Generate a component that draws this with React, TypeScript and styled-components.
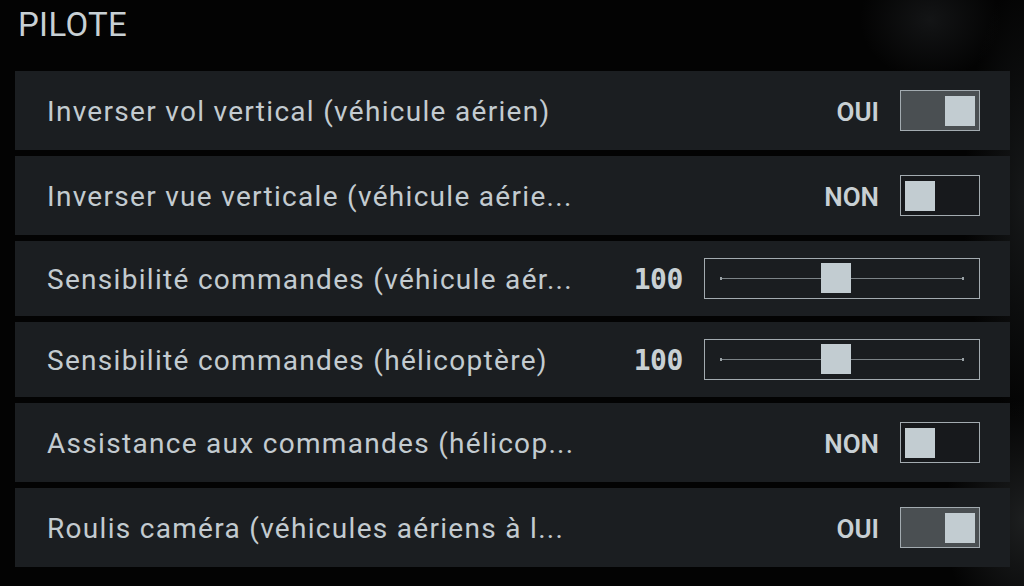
import React from 'react'
import styled, { createGlobalStyle } from 'styled-components'

const GlobalStyle = createGlobalStyle`
  html, body {
    margin: 0;
    padding: 0;
    background: #000;
  }
  body {
    font-family: Roboto, 'Liberation Sans', sans-serif;
    color: #c3cbd0;
  }
`

const Page = styled.div`
  width: 1024px;
  height: 586px;
  box-sizing: border-box;
  padding: 6px 14px 0 15px;
  overflow: hidden;
  background:
    radial-gradient(ellipse 60px 220px at 1024px 200px, rgba(40, 44, 46, 0.5), transparent),
    radial-gradient(ellipse 80px 120px at 1024px 520px, rgba(60, 64, 66, 0.45), transparent),
    radial-gradient(ellipse 70px 60px at 930px 20px, rgba(30, 32, 34, 0.6), transparent),
    #030303;
`

const Title = styled.h1`
  margin: 0 0 0 3px;
  height: 65px;
  font-size: 33px;
  font-weight: 400;
  letter-spacing: 0.3px;
  line-height: 38px;
  color: #c8d0d4;
`

const List = styled.div`
  display: flex;
  flex-direction: column;
  gap: 6px;
  width: 995px;
`

const Row = styled.div<{ $compact?: boolean }>`
  display: flex;
  align-items: center;
  height: ${(p) => (p.$compact ? 75 : 79)}px;
  padding: 0 30px 0 32px;
  box-sizing: border-box;
  background: #1b1e21;
`

const Label = styled.span`
  font-size: 28px;
  line-height: 32px;
  letter-spacing: 1.3px;
  color: #c3cbd0;
  white-space: nowrap;
  padding-top: 3px;
`

const Value = styled.span<{ $mono?: boolean }>`
  margin-left: auto;
  margin-right: 21px;
  padding-top: 2px;
  font-family: ${(p) =>
    p.$mono ? "'DejaVu Sans Mono', monospace" : "Roboto, 'Liberation Sans', sans-serif"};
  font-size: ${(p) => (p.$mono ? 28 : 26)}px;
  font-weight: ${(p) => (p.$mono ? 700 : 600)};
  letter-spacing: ${(p) => (p.$mono ? -0.4 : 0)}px;
  color: #c8d0d4;
`

const Toggle = styled.div<{ $on: boolean }>`
  display: flex;
  justify-content: ${(p) => (p.$on ? 'flex-end' : 'flex-start')};
  align-items: center;
  width: 80px;
  height: 41px;
  box-sizing: border-box;
  padding: 0 4px;
  border: 1.5px solid #a3abb0;
  background: ${(p) => (p.$on ? '#4a4f52' : '#17191c')};
`

const Knob = styled.div`
  width: 30px;
  height: 30px;
  background: #c2ccd1;
`

const Slider = styled.div`
  position: relative;
  width: 276px;
  height: 41px;
  box-sizing: border-box;
  padding: 0 15px;
  display: flex;
  align-items: center;
  border: 1.5px solid #a3abb0;
  background: #1a1d20;
`

const Track = styled.div`
  position: relative;
  flex: 1;
  height: 1px;
  background: #7c8387;

  &::before,
  &::after {
    content: '';
    position: absolute;
    top: -1px;
    width: 2px;
    height: 3px;
    background: #9aa2a6;
  }
  &::before {
    left: 0;
  }
  &::after {
    right: 0;
  }
`

const Thumb = styled.div`
  position: absolute;
  top: -15px;
  width: 30px;
  height: 30px;
  background: #c2ccd1;
`

type Setting =
  | { label: string; kind: 'toggle'; on: boolean }
  | { label: string; kind: 'slider'; value: number; min: number; max: number }

const settings: Setting[] = [
  { label: 'Inverser vol vertical (véhicule aérien)', kind: 'toggle', on: true },
  { label: 'Inverser vue verticale (véhicule aérie...', kind: 'toggle', on: false },
  { label: 'Sensibilité commandes (véhicule aér...', kind: 'slider', value: 100, min: 10, max: 200 },
  { label: 'Sensibilité commandes (hélicoptère)', kind: 'slider', value: 100, min: 10, max: 200 },
  { label: 'Assistance aux commandes (hélicop...', kind: 'toggle', on: false },
  { label: 'Roulis caméra (véhicules aériens à l...', kind: 'toggle', on: true },
]

const TRACK_WIDTH = 243
const THUMB_WIDTH = 30

const App: React.FC = () => {
  return (
    <Page>
      <GlobalStyle />
      <Title>PILOTE</Title>
      <List>
        {settings.map((s) =>
          s.kind === 'toggle' ? (
            <Row key={s.label}>
              <Label>{s.label}</Label>
              <Value>{s.on ? 'OUI' : 'NON'}</Value>
              <Toggle $on={s.on}>
                <Knob />
              </Toggle>
            </Row>
          ) : (
            <Row key={s.label} $compact>
              <Label>{s.label}</Label>
              <Value $mono>{s.value}</Value>
              <Slider>
                <Track>
                  <Thumb
                    style={{
                      left:
                        ((s.value - s.min) / (s.max - s.min)) *
                        (TRACK_WIDTH - THUMB_WIDTH),
                    }}
                  />
                </Track>
              </Slider>
            </Row>
          )
        )}
      </List>
    </Page>
  )
}

export default App
